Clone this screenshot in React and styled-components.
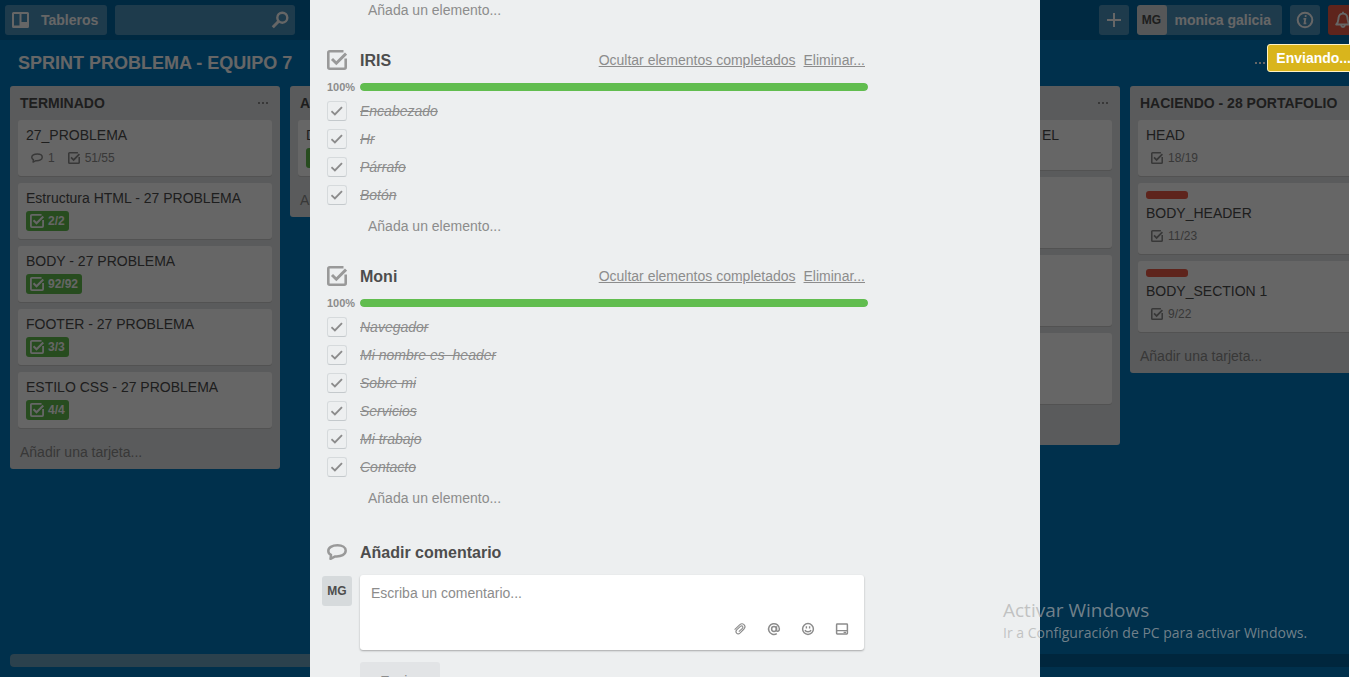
import React from "react";
import styled, { createGlobalStyle, css } from "styled-components";

const GlobalStyle = createGlobalStyle`
  *, *::before, *::after { box-sizing: border-box; }
  body {
    margin: 0;
    background: #fff;
    color: #4d4d4d;
    font: 14px/18px "Liberation Sans", Arial, sans-serif;
  }
  button, input, textarea { font: inherit; color: inherit; }
  button { border: 0; padding: 0; background: none; cursor: pointer; }
  h1, h2, h3, ul, p { margin: 0; padding: 0; }
  ul { list-style: none; }
`;

const Page = styled.div`
  position: relative;
  height: 100vh;
  overflow: hidden;
`;

const Backdrop = styled.div`
  position: relative;
  height: 100%;
  margin-right: 1px;
  overflow: hidden;
  &::after {
    content: "";
    position: absolute;
    inset: 0;
    background: rgba(0, 0, 0, 0.6);
  }
`;

/* The board runs on under the modal's scrollbar. */
const Board = styled.div`
  display: flex;
  flex-direction: column;
  width: calc(100% + 14px);
  height: 100%;
  background: #0079bf;
`;

const Header = styled.header`
  display: flex;
  gap: 8px;
  height: 40px;
  padding: 5px;
  background: #0067a3;
  color: #fff;
`;

const HeaderButton = styled.button`
  display: flex;
  align-items: center;
  justify-content: center;
  gap: 12px;
  min-width: 30px;
  height: 30px;
  padding: 0 ${(p) => (p.$wide ? 9 : 0)}px 0 ${(p) => (p.$wide ? 7 : 0)}px;
  border-radius: 3px;
  overflow: hidden;
  background: ${(p) => (p.$alert ? "#eb5a46" : "#4d94bf")};
  color: #fff;
  font-weight: bold;
`;

const Search = styled.label`
  display: flex;
  align-items: center;
  width: 180px;
  height: 30px;
  padding: 0 6px;
  border-radius: 3px;
  background: #4d94bf;
`;

const SearchInput = styled.input`
  flex: 1;
  min-width: 0;
  border: 0;
  background: transparent;
  outline: 0;
`;

const HeaderRight = styled.div`
  display: flex;
  gap: 8px;
  margin-left: auto;
`;

const MemberButton = styled(HeaderButton)`
  gap: 8px;
  padding: 0 11px 0 0;
`;

const Initials = styled.span`
  width: 30px;
  height: 30px;
  margin-top: ${(p) => (p.$offset ? 1 : 0)}px;
  border-radius: 3px;
  background: #d6dadc;
  color: #4d4d4d;
  font-size: 12px;
  font-weight: bold;
  line-height: 30px;
  text-align: center;
`;

const BoardHeader = styled.div`
  display: flex;
  align-items: center;
  justify-content: space-between;
  height: 46px;
  padding: 0 98px 0 18px;
  color: #fff;
`;

const BoardTitle = styled.h1`
  font-size: 18px;
  line-height: 24px;
`;

const Lists = styled.main`
  display: flex;
  flex: 1;
  align-items: flex-start;
  gap: 10px;
  min-height: 0;
  padding-left: 10px;
  overflow: hidden;
`;

const ListBox = styled.section`
  flex: 0 0 270px;
  padding: 0 8px;
  border-radius: 3px;
  background: #e2e4e6;
`;

const ListHeader = styled.div`
  display: flex;
  align-items: center;
  justify-content: space-between;
  height: 34px;
  padding: 0 4px 0 2px;
`;

const ListTitle = styled.h2`
  font-size: 14px;
  line-height: 18px;
  white-space: nowrap;
`;

const MenuButton = styled.button`
  display: flex;
  color: ${(p) => (p.$light ? "#fff" : "#8c8c8c")};
`;

const Cards = styled.div`
  display: flex;
  flex-direction: column;
  gap: 7px;
`;

const CardBox = styled.article`
  min-height: ${(p) => p.$min || 56}px;
  padding: 6px 8px 8px;
  border-radius: 3px;
  background: #fff;
  box-shadow: 0 1px 0 #ccc;
`;

const Label = styled.div`
  width: 42px;
  height: 8px;
  margin: 2px 0 5px;
  border-radius: 3px;
  background: #eb5a46;
`;

const CardTitle = styled.h3`
  font-size: 14px;
  font-weight: normal;
  line-height: 18px;
  text-indent: ${(p) => p.$indent || 0}px;
  white-space: nowrap;
`;

const Badges = styled.div`
  display: flex;
  gap: 4px;
  margin-top: 4px;
`;

const Badge = styled.span`
  display: flex;
  align-items: center;
  gap: 4px;
  height: 20px;
  padding: 0 4px;
  border-radius: 3px;
  color: #8c8c8c;
  font-size: 12px;
  & > svg { margin: 0 ${(p) => (p.$done ? 0 : 1)}px; }
  ${(p) =>
    p.$done &&
    css`
      background: #61bd4f;
      color: #fff;
      font-weight: bold;
    `}
`;

const AddCard = styled.button`
  display: block;
  height: 41px;
  padding: 7px 2px 0;
  color: #8c8c8c;
`;

const ScrollTrack = styled.div`
  flex: none;
  height: 13px;
  margin: 0 0 10px 10px;
  border-radius: 4px;
  background: #005f99;
`;

const ScrollThumb = styled.div`
  width: 60%;
  height: 100%;
  border-radius: 4px;
  background: #6ba2c0;
`;

const ModalLayer = styled.div`
  position: absolute;
  inset: 0;
  display: flex;
  justify-content: center;
  overflow: hidden;
`;

const Modal = styled.div`
  width: 730px;
  max-width: 100%;
  padding: 0 174px 0 12px;
  overflow: hidden;
  background: #edeff0;
`;

const AddItem = styled.button`
  display: block;
  height: ${(p) => (p.$first ? 20 : 34)}px;
  margin: 0 0 ${(p) => (p.$first ? 24 : 17)}px 46px;
  color: #8c8c8c;
`;

const SectionHeader = styled.div`
  display: grid;
  grid-template-columns: 30px 1fr auto;
  column-gap: 8px;
  align-items: center;
  height: 32px;
  margin-top: ${(p) => (p.$spaced ? 21 : 0)}px;
  & > svg { justify-self: center; color: #999; }
`;

const SectionTitle = styled.h2`
  padding-top: 2px;
  font-size: 16px;
  line-height: 20px;
`;

const Actions = styled.div`
  display: flex;
  gap: 8px;
  padding-right: 1px;
`;

const ActionLink = styled.a`
  color: #8c8c8c;
  text-decoration: underline;
`;

const ProgressRow = styled.div`
  display: grid;
  grid-template-columns: 38px 1fr;
  align-items: center;
  height: 21px;
  margin-right: -2px;
  padding-top: 1px;
`;

const Percent = styled.span`
  padding-left: 5px;
  color: #8c8c8c;
  font-size: 11px;
  font-weight: bold;
  line-height: 12px;
`;

const Track = styled.div`
  height: 8px;
  border-radius: 4px;
  background: #d6dadc;
  overflow: hidden;
`;

const Fill = styled.div`
  height: 100%;
  border-radius: 4px;
  background: #61bd4f;
`;

const Item = styled.label`
  display: flex;
  align-items: center;
  gap: 13px;
  height: 28px;
  padding-left: 5px;
  color: #8c8c8c;
  font-style: italic;
  text-decoration: line-through;
  white-space: pre;
`;

const CheckWrap = styled.span`
  display: grid;
  place-items: center;
  & > * { grid-area: 1 / 1; }
  & > svg { pointer-events: none; }
`;

const CheckInput = styled.input`
  appearance: none;
  width: 20px;
  height: 20px;
  margin: 0;
  border: 1px solid #d6dadc;
  border-bottom-color: #c4c9cc;
  border-radius: 3px;
`;

const CommentRow = styled.form`
  display: grid;
  grid-template-columns: 30px 1fr;
  column-gap: 8px;
  align-items: start;
  margin-top: 7px;
  padding-right: 2px;
`;

const CommentBox = styled.div`
  height: 75px;
  border-radius: 3px;
  background: #fff;
  box-shadow: 0 1px 2px rgba(0, 0, 0, 0.3);
`;

const CommentInput = styled.textarea`
  display: block;
  width: 100%;
  height: 44px;
  padding: 9px 11px;
  border: 0;
  outline: 0;
  resize: none;
  background: transparent;
  &::placeholder { color: #8c8c8c; opacity: 1; }
`;

const CommentTools = styled.div`
  display: flex;
  justify-content: flex-end;
  gap: 20px;
  padding: 3px 15px 0;
`;

const ToolButton = styled.button`
  display: flex;
  color: #8c8c8c;
`;

const SendButton = styled.button`
  width: 80px;
  height: 38px;
  margin-top: 12px;
  border-radius: 3px;
  background: #e2e4e6;
  color: #8c8c8c;
`;

const Toast = styled.div`
  position: absolute;
  top: 44px;
  right: -10px;
  height: 28px;
  padding: 0 8px;
  border: 1px solid #fff3c2;
  border-radius: 3px;
  background: #d9b51c;
  color: #fff;
  font-weight: bold;
  line-height: 26px;
`;

const Watermark = styled.div`
  position: absolute;
  left: calc(100% - 347px);
  bottom: 34px;
  color: rgba(171, 171, 171, 0.67);
  font-family: "Open Sans", "Noto Sans", sans-serif;
  font-size: 14px;
  line-height: 20px;
  white-space: nowrap;
`;

const WatermarkTitle = styled.p`
  font-size: 19px;
  line-height: 26px;
`;

const Svg = ({ size, h, box = "0 0 20 20", children }) => (
  <svg width={size} height={h || size} viewBox={box} fill="none" stroke="currentColor" aria-hidden="true">
    {children}
  </svg>
);

const ChecklistIcon = ({ size }) => (
  <Svg size={size}>
    <path d="M16.5 1.3H2.7Q1.3 1.3 1.3 2.7V17.3Q1.3 18.7 2.7 18.7H17.3Q18.7 18.7 18.7 17.3V8.5" strokeWidth="2.6" />
    <path d="M5 9 9.3 13.2 19 3.6" strokeWidth="2.9" />
  </Svg>
);

const BubbleIcon = ({ size }) => (
  <Svg size={size} h={Math.round(size * 0.8)} box="0 0 20 16">
    <path
      d="M10.5 1.3C5 1.3 1.3 3.6 1.3 6.9c0 1.9 1.2 3.2 2.7 4L3.5 14.8 8.2 12.4c6 .4 10.5-1.8 10.5-5.8 0-3.2-3.3-5.3-8.2-5.3Z"
      strokeWidth="2.5"
      strokeLinejoin="round"
    />
  </Svg>
);

const DotsIcon = () => (
  <svg width="10" height="4" viewBox="0 0 10 4" fill="currentColor" aria-hidden="true">
    <path d="M0 1h2v2H0zM4 1h2v2H4zM8 1h2v2H8z" />
  </svg>
);

const LogoIcon = () => (
  <svg width="17" height="16" viewBox="0 0 17 16" aria-hidden="true">
    <path
      fill="#fff"
      fillRule="evenodd"
      d="M1.5 0h14Q17 0 17 1.5v13Q17 16 15.5 16h-14Q0 16 0 14.5v-13Q0 0 1.5 0ZM2 2v11.5h5.5V2ZM9.5 2v8H15V2Z"
    />
  </svg>
);

const SearchIcon = () => (
  <Svg size={18} box="0 0 18 18">
    <circle cx="11.3" cy="6.7" r="5" strokeWidth="2.4" />
    <path d="M7.7 10.3 1.8 16.2" strokeWidth="3" />
  </Svg>
);

const TickIcon = () => (
  <Svg size={12} box="0 0 12 12">
    <path d="M.4 6.2 3.9 9.4 11 2.2" strokeWidth="1.9" />
  </Svg>
);

const PlusIcon = () => (
  <Svg size={14} box="0 0 14 14">
    <path d="M7 0v14M0 7h14" strokeWidth="2" />
  </Svg>
);

const InfoIcon = () => (
  <Svg size={18} box="0 0 18 18">
    <circle cx="9" cy="9" r="7.3" strokeWidth="2" />
    <path d="M9.8 4.2 9.5 6M7.5 7.8H9.3L8.5 12.4H10.3" strokeWidth="1.8" />
  </Svg>
);

const BellIcon = () => (
  <Svg size={18} box="0 0 18 18">
    <path d="M2.2 13.5C4.5 11.5 4.2 9 4.6 6.5 5 4 6.8 2.6 9 2.6s4 1.4 4.4 3.9c.4 2.5.1 5 2.4 7ZM9 .8v2M7.2 14.5c.2 2 3.4 2 3.6 0" strokeWidth="1.9" strokeLinejoin="round" />
  </Svg>
);

const ClipIcon = () => (
  <Svg size={14} box="0 0 14 14">
    <path
      d="M1.6 7.7 6.6 2.9C8 1.6 9.7 1.5 11 2.6 12.3 3.9 12.3 5.6 11 7L7.2 10.9C6 12 4.6 12.2 3.6 11.2 2.6 10.1 2.8 8.8 3.9 7.7L7.4 4.4C8.2 3.7 9 3.7 9.6 4.2 10.1 4.9 10 5.6 9.4 6.3L5.8 9.7"
      strokeWidth="1.1"
    />
  </Svg>
);

const AtIcon = () => (
  <Svg size={14} box="0 0 14 14">
    <circle cx="7" cy="7" r="2.4" strokeWidth="1.5" />
    <path d="M9.5 4.3V8.2C9.5 9.9 12.4 9.8 12.4 7A5.4 5.4 0 1 0 9.8 11.7" strokeWidth="1.5" />
  </Svg>
);

const SmileIcon = () => (
  <Svg size={14} box="0 0 14 14">
    <circle cx="7" cy="7" r="5.4" strokeWidth="1.5" />
    <path d="M5.4 4.3v2.2M8.6 4.3v2.2M4 8c.8 2.4 5.2 2.4 6 0" strokeWidth="1.4" />
  </Svg>
);

const CardIcon = () => (
  <Svg size={14} box="0 0 14 14">
    <rect x="1.6" y="2.1" width="10.8" height="9.8" rx=".6" strokeWidth="1.5" />
    <path d="M2 8.6h10M8.6 10.4h2.4" strokeWidth="1.4" />
  </Svg>
);

const lists = [
  {
    title: "TERMINADO",
    cards: [
      { title: "27_PROBLEMA", comments: "1", checks: "51/55" },
      { title: "Estructura HTML - 27 PROBLEMA", checks: "2/2", done: true },
      { title: "BODY - 27 PROBLEMA", checks: "92/92", done: true },
      { title: "FOOTER - 27 PROBLEMA", checks: "3/3", done: true },
      { title: "ESTILO CSS - 27 PROBLEMA", checks: "4/4", done: true },
    ],
  },
  { title: "A", cards: [{ title: "D", checks: "", done: true }] },
  { title: "", cards: [] },
  { title: "", cards: [{ title: "EL", indent: 176, min: 50 }, { min: 71 }, { min: 71 }, { min: 71 }] },
  {
    title: "HACIENDO - 28 PORTAFOLIO",
    cards: [
      { title: "HEAD", checks: "18/19" },
      { title: "BODY_HEADER", checks: "11/23", label: true },
      { title: "BODY_SECTION 1", checks: "9/22", label: true },
    ],
  },
];

const checklists = [
  { title: "IRIS", items: ["Encabezado", "Hr", "Párrafo", "Botón"] },
  { title: "Moni", items: ["Navegador", "Mi nombre es  header", "Sobre mi", "Servicios", "Mi trabajo", "Contacto"] },
];

const Card = ({ title, comments, checks, done, label, indent, min }) => (
  <CardBox $min={min}>
    {label && <Label />}
    {title && <CardTitle $indent={indent}>{title}</CardTitle>}
    {checks !== undefined && (
      <Badges>
        {comments && (
          <Badge>
            <BubbleIcon size={12} />
            {comments}
          </Badge>
        )}
        <Badge $done={done}>
          <ChecklistIcon size={done ? 14 : 12} />
          {checks}
        </Badge>
      </Badges>
    )}
  </CardBox>
);

const List = ({ title, cards }) => (
  <ListBox>
    <ListHeader>
      <ListTitle>{title}</ListTitle>
      {title !== "HACIENDO - 28 PORTAFOLIO" && (
        <MenuButton aria-label="Menú de la lista">
          <DotsIcon />
        </MenuButton>
      )}
    </ListHeader>
    <Cards>
      {cards.map((card, i) => (
        <Card key={i} {...card} />
      ))}
    </Cards>
    <AddCard>Añadir una tarjeta...</AddCard>
  </ListBox>
);

const Checklist = ({ title, items }) => (
  <section>
    <SectionHeader>
      <ChecklistIcon size={20} />
      <SectionTitle>{title}</SectionTitle>
      <Actions>
        <ActionLink href="#">Ocultar elementos completados</ActionLink>
        <ActionLink href="#">Eliminar...</ActionLink>
      </Actions>
    </SectionHeader>
    <ProgressRow>
      <Percent>100%</Percent>
      <Track>
        <Fill style={{ width: "100%" }} />
      </Track>
    </ProgressRow>
    <ul>
      {items.map((text) => (
        <li key={text}>
          <Item>
            <CheckWrap>
              <CheckInput type="checkbox" defaultChecked />
              <TickIcon />
            </CheckWrap>
            {text}
          </Item>
        </li>
      ))}
    </ul>
    <AddItem>Añada un elemento...</AddItem>
  </section>
);

export default function App() {
  return (
    <Page>
      <GlobalStyle />
      <Backdrop>
        <Board>
          <Header>
            <HeaderButton $wide>
              <LogoIcon />
              Tableros
            </HeaderButton>
            <Search>
              <SearchInput type="text" aria-label="Buscar" />
              <SearchIcon />
            </Search>
            <HeaderRight>
              <HeaderButton aria-label="Crear">
                <PlusIcon />
              </HeaderButton>
              <MemberButton>
                <Initials>MG</Initials>
                monica galicia
              </MemberButton>
              <HeaderButton aria-label="Información">
                <InfoIcon />
              </HeaderButton>
              <HeaderButton $alert aria-label="Notificaciones">
                <BellIcon />
              </HeaderButton>
            </HeaderRight>
          </Header>
          <BoardHeader>
            <BoardTitle>SPRINT PROBLEMA - EQUIPO 7</BoardTitle>
            <MenuButton $light aria-label="Menú del tablero">
              <DotsIcon />
            </MenuButton>
          </BoardHeader>
          <Lists>
            {lists.map((list, i) => (
              <List key={i} {...list} />
            ))}
          </Lists>
          <ScrollTrack>
            <ScrollThumb />
          </ScrollTrack>
        </Board>
      </Backdrop>
      <ModalLayer>
        <Modal role="dialog">
          <AddItem $first>Añada un elemento...</AddItem>
          {checklists.map((checklist) => (
            <Checklist key={checklist.title} {...checklist} />
          ))}
          <SectionHeader $spaced>
            <BubbleIcon size={20} />
            <SectionTitle>Añadir comentario</SectionTitle>
          </SectionHeader>
          <CommentRow>
            <Initials $offset>MG</Initials>
            <div>
              <CommentBox>
                <CommentInput placeholder="Escriba un comentario..." aria-label="Añadir comentario" />
                <CommentTools>
                  <ToolButton type="button" aria-label="Adjuntar">
                    <ClipIcon />
                  </ToolButton>
                  <ToolButton type="button" aria-label="Mencionar">
                    <AtIcon />
                  </ToolButton>
                  <ToolButton type="button" aria-label="Emoji">
                    <SmileIcon />
                  </ToolButton>
                  <ToolButton type="button" aria-label="Tarjeta">
                    <CardIcon />
                  </ToolButton>
                </CommentTools>
              </CommentBox>
              <SendButton type="button">Enviar</SendButton>
            </div>
          </CommentRow>
        </Modal>
      </ModalLayer>
      <Toast role="status">Enviando...</Toast>
      <Watermark>
        <WatermarkTitle>Activar Windows</WatermarkTitle>
        <p>Ir a Configuración de PC para activar Windows.</p>
      </Watermark>
    </Page>
  );
}
